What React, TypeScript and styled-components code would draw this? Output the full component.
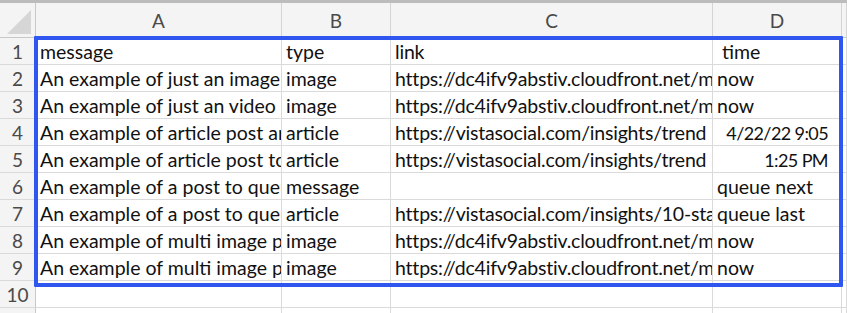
import { Fragment } from 'react'
import styled, { createGlobalStyle } from 'styled-components'

const GlobalStyle = createGlobalStyle`
  body {
    margin: 0;
    background: #ffffff;
    overflow: hidden;
  }
`

const COLS = [36, 246, 109, 322, 129]
const ROW_H = 27
const HEAD_H = 35

const Sheet = styled.div`
  position: relative;
  width: 847px;
  height: 313px;
  overflow: hidden;
  font-family: Lato, 'Open Sans', sans-serif;
  font-size: 19.5px;
  color: #111;
  border-top: 3px solid #bcbcbc;
  box-sizing: border-box;
`

const Grid = styled.div`
  display: grid;
  grid-template-columns: ${COLS.map((c) => c + 'px').join(' ')} 1fr;
  grid-template-rows: ${HEAD_H}px repeat(11, ${ROW_H}px);
`

// numbers in Calibri are narrower than Lato's, so right-aligned values get squeezed
const Cell = styled.div<{ $right?: boolean; $tight?: boolean }>`
  box-sizing: border-box;
  border-right: 1px solid #dadada;
  border-bottom: 1px solid #dadada;
  display: flex;
  align-items: center;
  justify-content: ${(p) => (p.$right ? 'flex-end' : 'flex-start')};
  padding: 1px ${(p) => (p.$right ? '13px' : '0')} 0 4px;
  font-size: ${(p) => (p.$right ? '18px' : 'inherit')};
  letter-spacing: ${(p) => (p.$right ? '-0.6px' : p.$tight ? '-0.2px' : 'normal')};
  white-space: pre;
  overflow: hidden;
`

const ColHead = styled.div`
  box-sizing: border-box;
  background: #f4f4f4;
  border-right: 1px solid #d4d4d4;
  border-bottom: 1px solid #c8c8c8;
  display: flex;
  align-items: center;
  justify-content: center;
  color: #4a4a4a;
  font-size: 19px;
`

const RowHead = styled.div`
  box-sizing: border-box;
  background: #f4f4f4;
  border-right: 1px solid #c8c8c8;
  border-bottom: 1px solid #dadada;
  display: flex;
  align-items: center;
  justify-content: center;
  color: #4a4a4a;
  font-size: 19px;
`

const Corner = styled.div`
  box-sizing: border-box;
  background: #f4f4f4;
  border-right: 1px solid #c8c8c8;
  border-bottom: 1px solid #c8c8c8;
  display: flex;
  align-items: flex-end;
  justify-content: flex-end;
  padding: 0 4px 3px 0;
`

const Triangle = styled.div`
  width: 0;
  height: 0;
  border-left: 24px solid transparent;
  border-bottom: 24px solid #d6d6d6;
`

const Selection = styled.div`
  position: absolute;
  left: 34px;
  top: 33px;
  width: 809px;
  height: 251px;
  border: 4px solid #2f57f0;
  border-radius: 1px;
  box-sizing: border-box;
  pointer-events: none;
`

type Row = [string, string, string, string, boolean?]

const rows: Row[] = [
  ['message', 'type', 'link', ' time'],
  ['An example of just an image', 'image', 'https://dc4ifv9abstiv.cloudfront.net/m', 'now'],
  ['An example of just an video p', 'image', 'https://dc4ifv9abstiv.cloudfront.net/m', 'now'],
  ['An example of article post ar', 'article', 'https://vistasocial.com/insights/trend', '4/22/22 9:05', true],
  ['An example of article post to', 'article', 'https://vistasocial.com/insights/trend', '1:25 PM', true],
  ['An example of a post to queu', 'message', '', 'queue next'],
  ['An example of a post to queu', 'article', 'https://vistasocial.com/insights/10-sta', 'queue last'],
  ['An example of multi image p', 'image', 'https://dc4ifv9abstiv.cloudfront.net/m', 'now'],
  ['An example of multi image p', 'image', 'https://dc4ifv9abstiv.cloudfront.net/m', 'now'],
]

const App = () => {
  const all: Row[] = [...rows, ['', '', '', ''], ['', '', '', '']]
  return (
    <>
      <GlobalStyle />
      <Sheet>
        <Grid>
          <Corner>
            <Triangle />
          </Corner>
          {['A', 'B', 'C', 'D'].map((l) => (
            <ColHead key={l}>{l}</ColHead>
          ))}
          <ColHead />
          {all.map((r, i) => (
            <Fragment key={i}>
              <RowHead>{i < 10 ? i + 1 : ''}</RowHead>
              <Cell>{r[0]}</Cell>
              <Cell>{r[1]}</Cell>
              <Cell $tight>{r[2]}</Cell>
              <Cell $right={r[4]}>{r[3]}</Cell>
              <Cell />
            </Fragment>
          ))}
        </Grid>
        <Selection />
      </Sheet>
    </>
  )
}

export default App
